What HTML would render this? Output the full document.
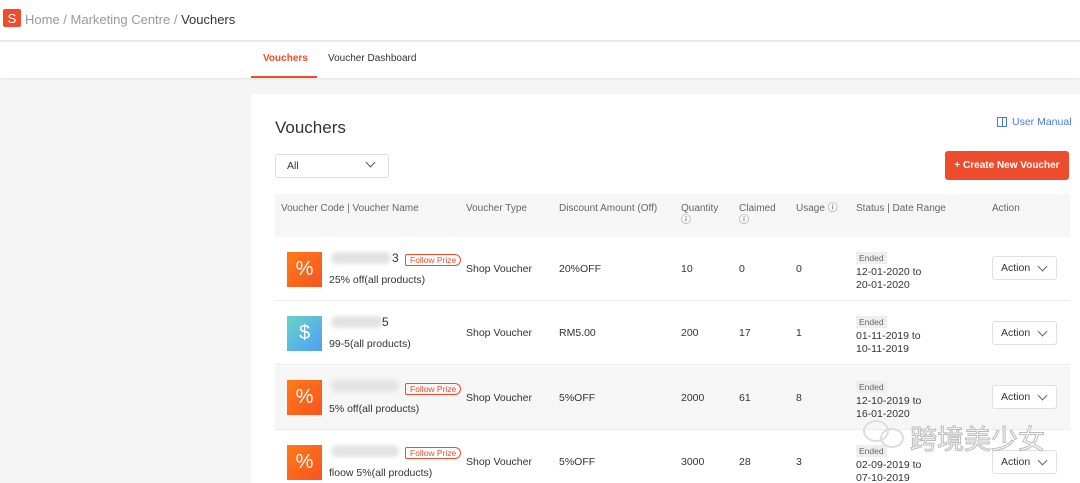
<!DOCTYPE html>
<html><head><meta charset="utf-8"><style>
*{margin:0;padding:0;box-sizing:border-box}
html,body{width:1080px;height:483px;overflow:hidden}
body{background:#f5f5f5;font-family:"Liberation Sans","Noto Sans CJK SC",sans-serif;position:relative;color:#333}
.a{position:absolute;white-space:nowrap}
.top{left:0;top:0;width:1080px;height:40px;background:#fff;box-shadow:0 1px 3px rgba(0,0,0,.08)}
.tabs{left:0;top:42px;width:1080px;height:36px;background:#fff;box-shadow:0 1px 3px rgba(0,0,0,.08)}
.card{left:251px;top:94px;width:829px;height:400px;background:#fff}
.th{font-size:10px;color:#666;line-height:12px}
.td{font-size:10.5px;color:#333}
.row{left:275px;width:795px;height:64px;border-bottom:1px solid #ececec}
.ic{width:35px;height:35px;color:#fff;font-size:20px;text-align:center;line-height:35px}
.or{background:linear-gradient(135deg,#ff7a1a,#f7541e)}
.bl{background:linear-gradient(135deg,#6ad3c8,#4f9ef5)}
.blur{height:12px;background:#e3e3e3;border-radius:6px;filter:blur(2px)}
.fp{font-size:8.5px;color:#ee4d2d;border:1px solid #ee4d2d;border-radius:2px 6px 6px 2px;padding:0 4px;line-height:10px}
.ended{font-size:8.5px;color:#666;background:#eee;padding:1px 3px}
.act{width:65px;height:24px;border:1px solid #e0e0e0;border-radius:3px;font-size:10.5px;color:#333;padding:5px 0 0 8px;background:#fff}
.act:after{content:"";position:absolute;right:10px;top:6px;width:6px;height:6px;border-right:1px solid #666;border-bottom:1px solid #666;transform:rotate(45deg)}
</style></head><body>
<div class="a top"></div>
<div class="a" style="left:3px;top:9px;width:18px;height:18px;background:#ee4d2d;border-radius:2px;color:#fff;font-size:13px;text-align:center;line-height:19px">S</div>
<div class="a" style="left:25px;top:12px;font-size:13px;color:#999">Home / Marketing Centre / <span style="color:#333">Vouchers</span></div>
<div class="a tabs"></div>
<div class="a" style="left:263px;top:53px;font-size:10px;color:#ee4d2d;font-weight:bold">Vouchers</div>
<div class="a" style="left:251px;top:76px;width:66px;height:2px;background:#ee4d2d"></div>
<div class="a" style="left:328px;top:53px;font-size:10px;color:#333">Voucher Dashboard</div>
<div class="a card"></div>
<div class="a" style="left:275px;top:118px;font-size:17px;color:#333">Vouchers</div>
<div class="a" style="left:997px;top:117px;width:10px;height:10px;border:1px solid #4a7ad8"></div>
<div class="a" style="left:1002px;top:117px;width:1px;height:10px;background:#4a7ad8"></div>
<div class="a" style="left:1012px;top:116px;font-size:10.5px;color:#4a7ad8">User Manual</div>
<div class="a" style="left:275px;top:154px;width:114px;height:24px;border:1px solid #ddd;border-radius:3px;font-size:10.5px;padding:5px 0 0 11px">All</div>
<div class="a" style="left:367px;top:159px;width:7px;height:7px;border-right:1px solid #555;border-bottom:1px solid #555;transform:rotate(45deg)"></div>
<div class="a" style="left:945px;top:151px;width:124px;height:29px;background:#ee4d2d;border-radius:3px;color:#fff;font-size:10px;font-weight:bold;text-align:center;line-height:29px">+ Create New Voucher</div>
<div class="a" style="left:275px;top:194px;width:795px;height:43px;background:#f6f6f6"></div>
<div class="a th" style="left:281px;top:203px">Voucher Code | Voucher Name</div>
<div class="a th" style="left:466px;top:203px">Voucher Type</div>
<div class="a th" style="left:559px;top:203px">Discount Amount (Off)</div>
<div class="a th" style="left:681px;top:203px">Quantity<br>ⓘ</div>
<div class="a th" style="left:739px;top:203px">Claimed<br>ⓘ</div>
<div class="a th" style="left:796px;top:203px">Usage ⓘ</div>
<div class="a th" style="left:856px;top:203px">Status | Date Range</div>
<div class="a th" style="left:992px;top:203px">Action</div>

<div class="a row" style="top:237px"></div>
<div class="a row" style="top:301px"></div>
<div class="a row" style="top:366px;background:#f6f6f6"></div>
<div class="a row" style="top:430px"></div>

<div class="a ic or" style="left:287px;top:252px">%</div>
<div class="a blur" style="left:331px;top:252px;width:60px"></div>
<div class="a td" style="left:392px;top:251px;font-size:12px">3</div>
<div class="a fp" style="left:405px;top:254px">Follow Prize</div>
<div class="a td" style="left:329px;top:274px">25% off(all products)</div>
<div class="a td" style="left:466px;top:263px">Shop Voucher</div>
<div class="a td" style="left:559px;top:263px">20%OFF</div>
<div class="a td" style="left:681px;top:263px">10</div>
<div class="a td" style="left:739px;top:263px">0</div>
<div class="a td" style="left:796px;top:263px">0</div>
<div class="a ended" style="left:856px;top:252px">Ended</div>
<div class="a td" style="left:856px;top:266px;line-height:13px">12-01-2020 to<br>20-01-2020</div>
<div class="a act" style="left:992px;top:256px">Action</div>

<div class="a ic bl" style="left:287px;top:316px">$</div>
<div class="a blur" style="left:331px;top:316px;width:52px"></div>
<div class="a td" style="left:382px;top:315px;font-size:12px">5</div>
<div class="a td" style="left:329px;top:338px">99-5(all products)</div>
<div class="a td" style="left:466px;top:327px">Shop Voucher</div>
<div class="a td" style="left:559px;top:327px">RM5.00</div>
<div class="a td" style="left:681px;top:327px">200</div>
<div class="a td" style="left:739px;top:327px">17</div>
<div class="a td" style="left:796px;top:327px">1</div>
<div class="a ended" style="left:856px;top:316px">Ended</div>
<div class="a td" style="left:856px;top:330px;line-height:13px">01-11-2019 to<br>10-11-2019</div>
<div class="a act" style="left:992px;top:321px">Action</div>

<div class="a ic or" style="left:287px;top:380px">%</div>
<div class="a blur" style="left:331px;top:380px;width:68px"></div>
<div class="a fp" style="left:405px;top:383px">Follow Prize</div>
<div class="a td" style="left:329px;top:403px">5% off(all products)</div>
<div class="a td" style="left:466px;top:392px">Shop Voucher</div>
<div class="a td" style="left:559px;top:392px">5%OFF</div>
<div class="a td" style="left:681px;top:392px">2000</div>
<div class="a td" style="left:739px;top:392px">61</div>
<div class="a td" style="left:796px;top:392px">8</div>
<div class="a ended" style="left:856px;top:381px">Ended</div>
<div class="a td" style="left:856px;top:395px;line-height:13px">12-10-2019 to<br>16-01-2020</div>
<div class="a act" style="left:992px;top:385px">Action</div>

<div class="a ic or" style="left:287px;top:445px">%</div>
<div class="a blur" style="left:331px;top:445px;width:68px"></div>
<div class="a fp" style="left:405px;top:447px">Follow Prize</div>
<div class="a td" style="left:329px;top:467px">floow 5%(all products)</div>
<div class="a td" style="left:466px;top:456px">Shop Voucher</div>
<div class="a td" style="left:559px;top:456px">5%OFF</div>
<div class="a td" style="left:681px;top:456px">3000</div>
<div class="a td" style="left:739px;top:456px">28</div>
<div class="a td" style="left:796px;top:456px">3</div>
<div class="a ended" style="left:856px;top:445px">Ended</div>
<div class="a td" style="left:856px;top:459px;line-height:13px">02-09-2019 to<br>07-10-2019</div>
<div class="a act" style="left:992px;top:450px">Action</div>

<div class="a" style="left:863px;top:420px;width:26px;height:22px;border:2px solid #ddd;border-radius:50%"></div>
<div class="a" style="left:880px;top:428px;width:24px;height:20px;border:2px solid #ddd;border-radius:50%"></div>
<div class="a" style="left:910px;top:418px;font-size:27px;color:#fff;-webkit-text-stroke:1px #bbb">跨境美少女</div>
</body></html>
